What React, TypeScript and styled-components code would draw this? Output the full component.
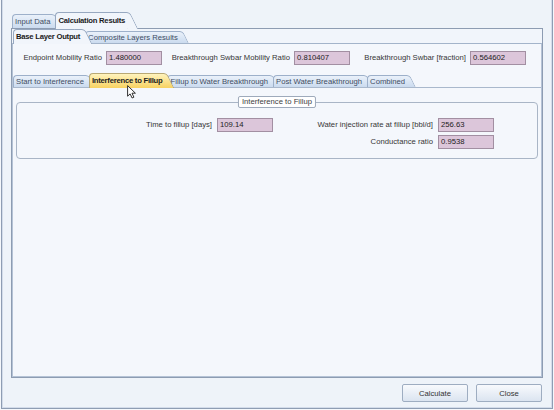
import React from 'react';
import styled, { createGlobalStyle } from 'styled-components';

const GlobalStyle = createGlobalStyle`
  html, body { margin: 0; padding: 0; background: #f4f7fb; }
  body {
    font-family: "Liberation Sans", Arial, sans-serif;
    font-size: 7.7px;
    color: #333;
  }
  #root { width: 554px; height: 410px; }
`;

const Window = styled.div`
  position: relative;
  box-sizing: border-box;
  width: 552px;
  height: 409px;
  margin-left: 1px;
  padding: 12px 9px 0 9px;
  background: #eef3f9;
  border: 1px solid #8e9db3;
  border-top: none;
  box-shadow: inset 1px 0 0 #d3dcea, inset -1px 0 0 #d3dcea, inset 0 -1px 0 #d3dcea;
  display: flex;
  flex-direction: column;
`;

const TabStrip = styled.div<{ $h: number; $pad: number; $mt?: number }>`
  position: relative;
  z-index: 2;
  display: flex;
  align-items: flex-end;
  flex: none;
  height: ${p => p.$h}px;
  margin-top: ${p => p.$mt ?? 0}px;
  padding-left: ${p => p.$pad}px;
`;

type Tone = 'blue' | 'plain' | 'yellow';

const toneBg: Record<Tone, string> = {
  blue: 'linear-gradient(#eaf1fa, #cbdbef)',
  plain: '#f1f5fb',
  yellow: 'linear-gradient(#fff3bd, #f8d262)',
};

const toneBorder: Record<Tone, string> = {
  blue: '#9db0ca',
  plain: '#97a8c0',
  yellow: '#b8a874',
};

const Tab = styled.div<{ $h: number; $active?: boolean; $tone: Tone }>`
  position: relative;
  z-index: ${p => (p.$active ? 3 : 1)};
  box-sizing: border-box;
  height: ${p => (p.$active ? p.$h + 3 : p.$h)}px;
  margin-bottom: ${p => (p.$active ? -1 : 0)}px;
  margin-right: 3px;
  padding: 0 2px 0 2px;
  border-top: 1px solid ${p => toneBorder[p.$tone]};
  border-left: 1px solid ${p => toneBorder[p.$tone]};
  border-top-left-radius: 4px;
  background: ${p => toneBg[p.$tone]};
  font-weight: ${p => (p.$active ? 700 : 400)};
  letter-spacing: ${p => (p.$active ? -0.25 : 0)}px;
  line-height: ${p => (p.$active ? p.$h + 1 : p.$h - 1)}px;
  white-space: nowrap;
  color: ${p => (p.$active ? '#1b1b1b' : '#3f4d63')};

  &::after {
    content: '';
    position: absolute;
    top: -1px;
    left: calc(100% - 8px);
    width: 11px;
    height: calc(100% + 1px);
    box-sizing: border-box;
    background: inherit;
    border-top: 1px solid ${p => toneBorder[p.$tone]};
    border-right: 1px solid ${p => toneBorder[p.$tone]};
    border-top-right-radius: 4px;
    transform: skewX(26deg);
    transform-origin: top left;
    z-index: 0;
  }
`;

const TabLabel = styled.span`
  position: relative;
  z-index: 1;
`;

const OuterPanel = styled.div`
  flex: none;
  height: 350px;
  box-sizing: border-box;
  display: flex;
  flex-direction: column;
  border: 1px solid #8d9cb2;
  background: #f1f5fb;
`;

const InnerPanel = styled.div`
  flex: 1;
  display: flex;
  flex-direction: column;
  box-sizing: border-box;
  padding-top: 7px;
  border: 1px solid #b5c3d6;
  border-top-color: #a3b4ca;
  background: #f4f7fc;
`;

const FieldRow = styled.div`
  display: grid;
  grid-template-columns: 84px 56px 126px 56px 114px 56px;
  column-gap: 3px;
  height: 14px;
  padding-left: 6px;
`;

const FieldLabel = styled.div<{ $col?: number }>`
  text-align: right;
  line-height: 14px;
  white-space: nowrap;
  color: #363636;
  padding-right: 1px;
  ${p => (p.$col ? `grid-column: ${p.$col};` : '')}
`;

const ValueBox = styled.div<{ $col?: number }>`
  box-sizing: border-box;
  height: 14px;
  border: 1px solid #a28fa2;
  background: #dcc6da;
  padding-left: 2px;
  line-height: 12px;
  color: #1c1c1c;
  ${p => (p.$col ? `grid-column: ${p.$col};` : '')}
`;

const SubPanel = styled.div`
  flex: 1;
  box-sizing: border-box;
  padding: 14px 3px 0 3px;
  border-top: 1px solid #a9b8cc;
  background: #f4f7fc;
`;

const GroupBox = styled.div`
  position: relative;
  box-sizing: border-box;
  height: 57px;
  padding-top: 15px;
  border: 1px solid #a9b5c6;
  border-radius: 4px;
`;

const GroupTitle = styled.div`
  position: absolute;
  top: -7px;
  left: 50%;
  transform: translateX(-50%);
  box-sizing: border-box;
  height: 12px;
  padding: 0 3px;
  border: 1px solid #9eaabb;
  border-radius: 2px;
  background: #ffffff;
  line-height: 10px;
  white-space: nowrap;
  color: #404040;
`;

const GroupGrid = styled.div`
  display: grid;
  grid-template-columns: 196px 56px 157px 56px;
  grid-auto-rows: 14px;
  column-gap: 4px;
  row-gap: 3px;
`;

const Footer = styled.div`
  flex: none;
  height: 30px;
  box-sizing: border-box;
  display: flex;
  justify-content: flex-end;
  align-items: flex-start;
  gap: 8px;
  padding-top: 6px;
  padding-right: 1px;
`;

const Button = styled.button`
  box-sizing: border-box;
  width: 66px;
  height: 18px;
  padding: 0;
  border: 1px solid #9eadc1;
  border-radius: 2px;
  background: linear-gradient(#f8fafd, #dbe4f0);
  font-family: inherit;
  font-size: 7.7px;
  color: #333;
`;

const Cursor = styled.svg`
  position: absolute;
  left: 125px;
  top: 85px;
  width: 10px;
  height: 14px;
  z-index: 10;
`;

const outerTabs = [
  { label: 'Input Data', active: false },
  { label: 'Calculation Results', active: true },
];

const innerTabs = [
  { label: 'Base Layer Output', active: true },
  { label: 'Composite Layers Results', active: false },
];

const subTabs = [
  { label: 'Start to Interference', active: false },
  { label: 'Interference to Fillup', active: true },
  { label: 'Fillup to Water Breakthrough', active: false },
  { label: 'Post Water Breakthrough', active: false },
  { label: 'Combined', active: false },
];

export default function App() {
  return (
    <>
      <GlobalStyle />
      <Window>
        <TabStrip $h={16} $pad={1}>
          {outerTabs.map(t => (
            <Tab key={t.label} $h={14} $active={t.active} $tone={t.active ? 'plain' : 'blue'}>
              <TabLabel>{t.label}</TabLabel>
            </Tab>
          ))}
        </TabStrip>
        <OuterPanel>
          <TabStrip $h={14} $pad={1}>
            {innerTabs.map(t => (
              <Tab key={t.label} $h={12} $active={t.active} $tone={t.active ? 'plain' : 'blue'}>
                <TabLabel>{t.label}</TabLabel>
              </Tab>
            ))}
          </TabStrip>
          <InnerPanel>
            <FieldRow>
              <FieldLabel>Endpoint Mobility Ratio</FieldLabel>
              <ValueBox>1.480000</ValueBox>
              <FieldLabel>Breakthrough Swbar Mobility Ratio</FieldLabel>
              <ValueBox>0.810407</ValueBox>
              <FieldLabel>Breakthrough Swbar [fraction]</FieldLabel>
              <ValueBox>0.564602</ValueBox>
            </FieldRow>
            <TabStrip $h={14} $pad={0} $mt={8}>
              {subTabs.map(t => (
                <Tab key={t.label} $h={12} $active={t.active} $tone={t.active ? 'yellow' : 'blue'}>
                  <TabLabel>{t.label}</TabLabel>
                </Tab>
              ))}
            </TabStrip>
            <SubPanel>
              <GroupBox>
                <GroupTitle>Interference to Fillup</GroupTitle>
                <GroupGrid>
                  <FieldLabel>Time to fillup [days]</FieldLabel>
                  <ValueBox>109.14</ValueBox>
                  <FieldLabel>Water injection rate at fillup [bbl/d]</FieldLabel>
                  <ValueBox>256.63</ValueBox>
                  <FieldLabel $col={3}>Conductance ratio</FieldLabel>
                  <ValueBox $col={4}>0.9538</ValueBox>
                </GroupGrid>
              </GroupBox>
            </SubPanel>
          </InnerPanel>
        </OuterPanel>
        <Footer>
          <Button>Calculate</Button>
          <Button>Close</Button>
        </Footer>
        <Cursor viewBox="0 0 10 14">
          <path
            d="M0.6 0.6 L0.6 11.2 L3.1 8.9 L5.1 13 L6.9 12.2 L5 8.2 L8.4 8.2 Z"
            fill="#ffffff"
            stroke="#1a1a1a"
            strokeWidth="0.9"
            strokeLinejoin="round"
          />
        </Cursor>
      </Window>
    </>
  );
}
